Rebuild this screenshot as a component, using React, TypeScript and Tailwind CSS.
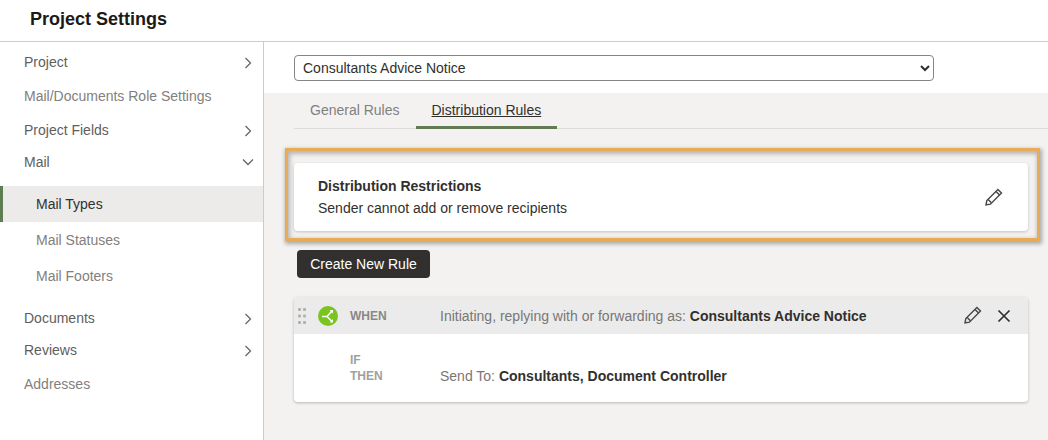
import React from 'react';

const font = { fontFamily: '"Liberation Sans", Arial, sans-serif' };

const Chevron = ({ down = false }: { down?: boolean }) => (
  <svg className={down ? '' : 'mt-[2px]'} width="14" height="14" viewBox="0 0 14 14" fill="none" stroke="#666" strokeWidth="1.3">
    {down ? <path d="M2 4.5 7 9.5l5-5" /> : <path d="M4.5 2 9.5 7l-5 5" />}
  </svg>
);

const Pencil = () => (
  <svg width="18" height="18" viewBox="0 0 18 18" fill="none" stroke="#484644" strokeWidth="1.4">
    <path d="M1 17 1.8 12.6 12.9 1.5 16.5 5.1 5.4 16.2Z" />
    <path d="M11 3.4 14.6 7M3.2 11.6 6.4 14.8" />
  </svg>
);

const NavRow = ({ label, h, muted, chevron, down }: { label: string; h: string; muted?: boolean; chevron?: boolean; down?: boolean }) => (
  <div className={`flex items-center justify-between pl-6 pr-[8px] ${h} ${muted ? 'text-[#82807e]' : 'text-[#605e5c]'}`}>
    <span>{label}</span>
    {chevron && <Chevron down={down} />}
  </div>
);

const SubRow = ({ label, active }: { label: string; active?: boolean }) => (
  <div
    className={`flex h-9 items-center pl-[33px] ${
      active ? 'border-l-[3px] border-[#5f7d52] bg-[#ecebe9] text-[#32302e]' : 'border-l-[3px] border-transparent text-[#82807e]'
    }`}
  >
    {label}
  </div>
);

export default function App() {
  return (
    <div className="flex h-[440px] w-[1048px] flex-col overflow-hidden bg-white text-sm" style={font}>
      <header className="flex h-[42px] shrink-0 items-center border-b border-[#cccccc] pb-[2px] pl-[30px]">
        <h1 className="text-[18px] font-bold text-[#1b1a19]">Project Settings</h1>
      </header>

      <div className="flex flex-1">
        <aside className="w-[264px] shrink-0 border-r border-[#cccccc] pt-[3px]">
          <NavRow label="Project" h="h-[34px]" chevron />
          <NavRow label="Mail/Documents Role Settings" h="h-[34px]" muted />
          <NavRow label="Project Fields" h="h-[34px]" chevron />
          <NavRow label="Mail" h="h-[30px]" chevron down />
          <div className="mb-2 mt-[9px]">
            <SubRow label="Mail Types" active />
            <SubRow label="Mail Statuses" />
            <SubRow label="Mail Footers" />
          </div>
          <NavRow label="Documents" h="h-8" chevron />
          <NavRow label="Reviews" h="h-8" chevron />
          <NavRow label="Addresses" h="h-[36px]" muted />
        </aside>

        <main className="flex flex-1 flex-col bg-[#f3f2f1]">
          <div className="h-[51px] shrink-0 bg-white pl-[30px] pt-[13px]">
            <select className="h-[26px] w-[640px] rounded border border-[#858585] bg-white pl-1 text-[#32302e]" defaultValue="a">
              <option value="a">Consultants Advice Notice</option>
            </select>
          </div>

          <div className="ml-[30px] flex h-9 shrink-0 border-b border-[#dddcda]">
            <div className="flex items-center px-4 pb-[1px] text-[#82807e]">General Rules</div>
            <div className="-mb-px flex items-center border-b-[3px] border-[#617b53] px-4 pt-[1px] text-[#32302e] underline">
              Distribution Rules
            </div>
          </div>

          <div className="ml-[21px] mr-2 mt-[19px] border-[3px] border-[#e8ab57] pb-[7px] pl-[6px] pr-[9px] pt-3 shadow-[1px_2px_4px_1px_rgba(0,0,0,0.3),inset_1px_2px_4px_1px_rgba(0,0,0,0.25)]">
            <div className="flex h-[68px] items-center justify-between rounded-sm bg-white pl-6 pr-[25px] shadow-[0_1px_3px_rgba(0,0,0,0.2)]">
              <div>
                <div className="font-bold leading-[22px] text-[#32302e]">Distribution Restrictions</div>
                <div className="leading-[22px] text-[#32302e]">Sender cannot add or remove recipients</div>
              </div>
              <Pencil />
            </div>
          </div>

          <button className="ml-[33px] mt-[9px] h-7 w-[133px] rounded-sm bg-[#32302e] text-white">Create New Rule</button>

          <div className="ml-[30px] mr-5 mt-[19px] rounded-sm bg-white shadow-[0_1px_3px_rgba(0,0,0,0.25)]">
            <div className="flex h-[37px] items-center bg-[#ebebeb]">
              <svg className="ml-1" width="9" height="16" viewBox="0 0 9 16" fill="#b3b1af">
                <rect x="0" y="0" width="3" height="3" rx="1" />
                <rect x="5" y="0" width="3" height="3" rx="1" />
                <rect x="0" y="6.5" width="3" height="3" rx="1" />
                <rect x="5" y="6.5" width="3" height="3" rx="1" />
                <rect x="0" y="13" width="3" height="3" rx="1" />
                <rect x="5" y="13" width="3" height="3" rx="1" />
              </svg>
              <svg className="ml-[11px]" width="20" height="20" viewBox="0 0 20 20">
                <circle cx="10" cy="10" r="10" fill="#7ac41f" />
                <path d="M4 10.5H9L14 5M9 10.5l5 5" fill="none" stroke="#fff" strokeWidth="1.5" />
                <path d="M11.5 4h3.5v3.5zM11.5 16.5h3.5V13z" fill="#fff" />
              </svg>
              <span className="ml-[12px] w-[90px] text-xs font-bold text-[#8a8886]">WHEN</span>
              <span className="flex-1 text-[#797775]">
                Initiating, replying with or forwarding as: <b className="text-[#32302e]">Consultants Advice Notice</b>
              </span>
              <div className="mb-[1px]">
                <Pencil />
              </div>
              <svg className="ml-[15px] mr-[17px]" width="14" height="14" viewBox="0 0 14 14" fill="none" stroke="#32302e" strokeWidth="1.7">
                <path d="M1.5 1.5l11 11M12.5 1.5l-11 11" />
              </svg>
            </div>
            <div className="flex h-[68px] pl-[56px] pt-[18px]">
              <div className="w-[90px] text-xs font-bold leading-4 text-[#a19f9d]">
                <div>IF</div>
                <div>THEN</div>
              </div>
              <div className="pt-[16px] leading-4 text-[#797775]">
                Send To: <b className="text-[#32302e]">Consultants, Document Controller</b>
              </div>
            </div>
          </div>
        </main>
      </div>
    </div>
  );
}
